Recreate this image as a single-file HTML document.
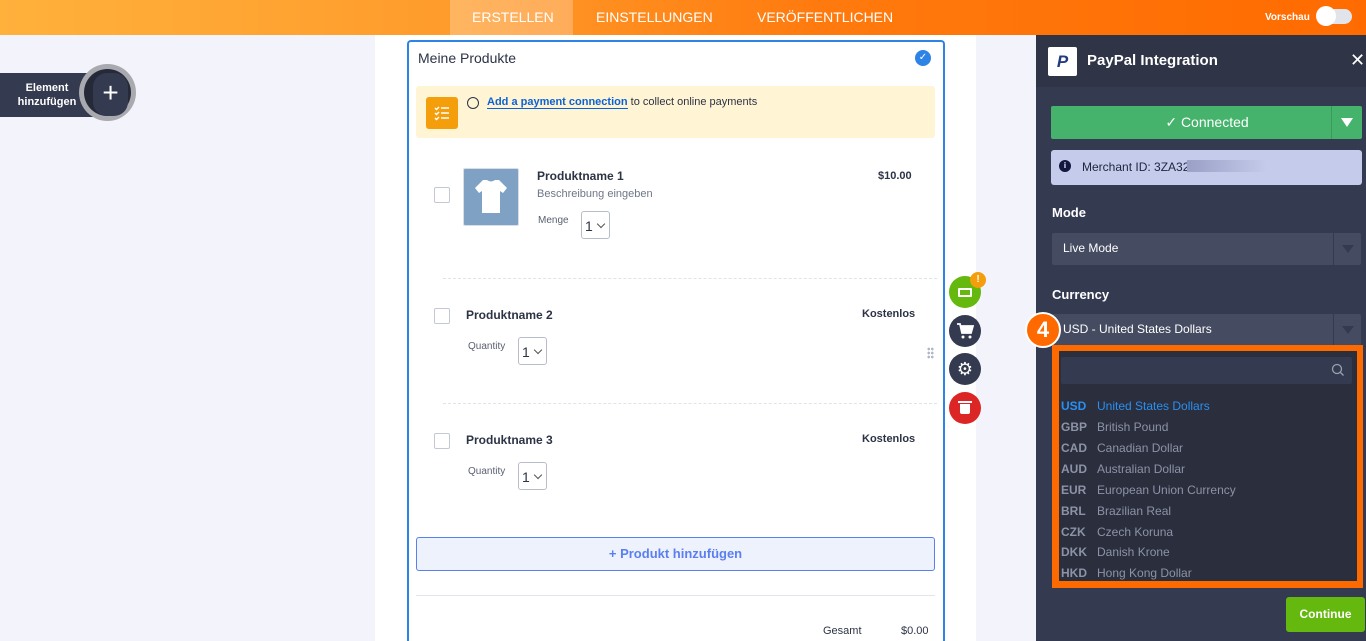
<!DOCTYPE html>
<html><head><meta charset="utf-8"><style>
*{box-sizing:border-box;margin:0;padding:0}
html,body{width:1366px;height:641px;overflow:hidden}
body{font-family:"Liberation Sans",sans-serif;background:#f3f4fb;position:relative}
#w{position:absolute;left:0;top:0;width:1366px;height:641px;overflow:hidden}
.a{position:absolute}
.top{left:0;top:0;width:1366px;height:35px;background:linear-gradient(90deg,#ffb13c 0%,#ff9a2a 35%,#ff7a0e 60%,#ff6b00 100%)}
.tab{top:0;height:35px;line-height:35px;color:#fff;font-size:14px}
.card{left:407px;top:40px;width:538px;height:601px;border:2px solid #2e84e6;border-bottom:none;border-radius:4px 4px 0 0;background:#fff}
.t{color:#2c3345}
.chk{width:16px;height:16px;border:1px solid #c3c8d4;border-radius:2px;background:#fff}
.sel{width:29px;height:28px;border:1px solid #b8bdc9;border-radius:3px;font-size:14px;color:#2c3345;padding:6px 0 0 3px}
.sel:after{content:"";position:absolute;left:16px;top:9px;width:5px;height:5px;border-right:1.5px solid #555;border-bottom:1.5px solid #555;transform:rotate(45deg)}
.dash{height:0;border-top:1px dashed #e0e3ea}
.rp{left:1036px;top:35px;width:330px;height:606px;background:#343a4f}
.fab{width:32px;height:32px;border-radius:50%}
.cur{font-size:12px;color:#8d93a6;left:1061px;width:295px}
.cur b{display:inline-block;width:36px;color:#8d93a6}
</style></head><body><div id="w">
<div class="a top"></div>
<div class="a" style="left:450px;top:0;width:123px;height:35px;background:rgba(255,255,255,.25)"></div>
<div class="a tab" style="left:472px">ERSTELLEN</div>
<div class="a tab" style="left:596px">EINSTELLUNGEN</div>
<div class="a tab" style="left:757px">VERÖFFENTLICHEN</div>
<div class="a" style="left:1265px;top:12px;color:#fff;font-size:10px;font-weight:bold">Vorschau</div>
<div class="a" style="left:1320px;top:9px;width:32px;height:15px;border-radius:8px;background:#e2e4ec"></div>
<div class="a" style="left:1316px;top:6px;width:20px;height:20px;border-radius:50%;background:#fff"></div>

<div class="a" style="left:0;top:73px;width:110px;height:44px;background:#343a4f;color:#fff;font-size:11px;font-weight:bold;text-align:center;padding:8px 16px 0 0;line-height:14px">Element<br>hinzufügen</div>
<div class="a" style="left:79px;top:64px;width:57px;height:57px;border-radius:50%;background:#a8aab0"></div>
<div class="a" style="left:84px;top:69px;width:47px;height:47px;border-radius:50%;background:#262a38"></div>
<div class="a" style="left:93px;top:73px;width:35px;height:43px;border-radius:14px;background:#343a4f;color:#fff;font-size:28px;line-height:40px;text-align:center">+</div>

<div class="a" style="left:375px;top:35px;width:601px;height:606px;background:#fff"></div>
<div class="a card"></div>
<div class="a t" style="left:418px;top:50px;font-size:14px">Meine Produkte</div>
<div class="a" style="left:915px;top:50px;width:16px;height:16px;border-radius:50%;background:#2e84e6;color:#fff;font-size:10px;text-align:center;line-height:16px">✓</div>
<div class="a" style="left:416px;top:86px;width:519px;height:52px;background:#fff4d4;border-radius:3px"></div>
<div class="a" style="left:426px;top:97px;width:32px;height:32px;background:#f59e0b;border-radius:3px"></div>
<svg class="a" style="left:434px;top:105px" width="16" height="16" viewBox="0 0 16 16" stroke="#fff" stroke-width="1.5" fill="none"><path d="M1 3l1.5 1.5L5 2M7 3h8M7 8h8M7 13h8M1 8l1.5 1.5L5 7M1 13l1.5 1.5L5 12"/></svg>
<div class="a" style="left:467px;top:97px;width:12px;height:12px;border:1.5px solid #2c3345;border-radius:50%"></div>
<div class="a" style="left:487px;top:96px;font-size:11px;color:#2c3345"><span style="color:#0b62d6;font-weight:bold;border-bottom:1px solid #0b62d6">Add a payment connection</span> to collect online payments</div>

<div class="a chk" style="left:434px;top:187px"></div>
<div class="a" style="left:463px;top:168px;width:56px;height:58px;background:#7ea1c4;border-radius:2px;border:1px solid #d8dde6"></div>
<svg class="a" style="left:473px;top:178px" width="36" height="38" viewBox="0 0 36 38"><path d="M10 2l4 0q4 3 8 0l4 0 8 8-4 5-3-2 0 22-18 0 0-22-3 2-4-5z" fill="#fff"/></svg>
<div class="a t" style="left:537px;top:169px;font-size:12px;font-weight:bold">Produktname 1</div>
<div class="a" style="left:537px;top:188px;font-size:11px;color:#6f7687">Beschreibung eingeben</div>
<div class="a" style="left:538px;top:215px;font-size:10px;color:#5a6070">Menge</div>
<div class="a sel" style="left:581px;top:211px">1</div>
<div class="a t" style="left:878px;top:170px;font-size:11px;font-weight:bold">$10.00</div>
<div class="a dash" style="left:443px;top:278px;width:494px"></div>

<div class="a chk" style="left:434px;top:308px"></div>
<div class="a t" style="left:466px;top:308px;font-size:12px;font-weight:bold">Produktname 2</div>
<div class="a t" style="left:862px;top:308px;font-size:11px;font-weight:bold">Kostenlos</div>
<div class="a" style="left:468px;top:341px;font-size:10px;color:#5a6070">Quantity</div>
<div class="a sel" style="left:518px;top:337px">1</div>
<div class="a" style="left:927px;top:347px;width:7px;height:12px;background:radial-gradient(circle,#b0b6c3 1.2px,transparent 1.5px) 0 0/3.5px 4px"></div>
<div class="a dash" style="left:443px;top:403px;width:494px"></div>

<div class="a chk" style="left:434px;top:433px"></div>
<div class="a t" style="left:466px;top:433px;font-size:12px;font-weight:bold">Produktname 3</div>
<div class="a t" style="left:862px;top:433px;font-size:11px;font-weight:bold">Kostenlos</div>
<div class="a" style="left:468px;top:466px;font-size:10px;color:#5a6070">Quantity</div>
<div class="a sel" style="left:518px;top:462px">1</div>

<div class="a" style="left:416px;top:537px;width:519px;height:34px;background:#eef2fd;border:1px solid #5a7ff0;border-radius:3px;color:#5a7ff0;font-size:13px;font-weight:bold;text-align:center;line-height:31px">+ Produkt hinzufügen</div>
<div class="a" style="left:416px;top:595px;width:519px;height:1px;background:#e3e5ea"></div>
<div class="a t" style="left:823px;top:625px;font-size:11px">Gesamt</div>
<div class="a t" style="left:901px;top:625px;font-size:11px">$0.00</div>

<div class="a fab" style="left:949px;top:276px;background:#64b80e"></div>
<div class="a" style="left:958px;top:288px;width:14px;height:9px;border:2px solid #fff;border-radius:1px"></div>
<div class="a" style="left:970px;top:272px;width:16px;height:16px;border-radius:50%;background:#f59e0b;color:#fff;font-size:10px;font-weight:bold;text-align:center;line-height:16px">!</div>
<div class="a fab" style="left:949px;top:315px;background:#343a4f"></div>
<svg class="a" style="left:956px;top:322px" width="18" height="18" viewBox="0 0 18 18" fill="#fff"><path d="M1 2h3l2 9h9l2-7H5" fill="none" stroke="#fff" stroke-width="1.8"/><path d="M5 4h12l-2 7H6z"/><circle cx="7" cy="15" r="1.5"/><circle cx="14" cy="15" r="1.5"/></svg>
<div class="a fab" style="left:949px;top:353px;background:#343a4f;color:#fff;font-size:18px;text-align:center;line-height:32px">⚙</div>
<div class="a fab" style="left:949px;top:392px;background:#dc2626"></div>
<div class="a" style="left:958px;top:401px;width:14px;height:2px;background:#fff"></div>
<div class="a" style="left:960px;top:404px;width:10px;height:10px;background:#fff;border-radius:0 0 2px 2px"></div>

<div class="a rp"></div>
<div class="a" style="left:1036px;top:35px;width:330px;height:52px;background:#2f3446"></div>
<div class="a" style="left:1048px;top:47px;width:29px;height:29px;background:#fff;border-radius:2px;color:#253b80;font-weight:bold;font-style:italic;font-size:17px;text-align:center;line-height:29px">P</div>
<div class="a" style="left:1087px;top:52px;color:#fff;font-size:15px;font-weight:bold">PayPal Integration</div>
<div class="a" style="left:1350px;top:50px;color:#fff;font-size:18px">✕</div>
<div class="a" style="left:1051px;top:106px;width:311px;height:33px;background:#45b36b;border-radius:2px"></div>
<div class="a" style="left:1331px;top:106px;width:1px;height:33px;background:#3a9a5a"></div>
<div class="a" style="left:1051px;top:114px;width:312px;text-align:center;color:#fff;font-size:14px">✓ Connected</div>
<div class="a" style="left:1341px;top:118px;border-left:6px solid transparent;border-right:6px solid transparent;border-top:9px solid #fff"></div>
<div class="a" style="left:1051px;top:150px;width:311px;height:35px;background:#c5cbea;border-radius:3px"></div>
<div class="a" style="left:1059px;top:160px;width:12px;height:12px;border-radius:50%;background:#101840;color:#fff;font-size:8px;text-align:center;line-height:12px;font-weight:bold">i</div>
<div class="a" style="left:1082px;top:160px;color:#1e2540;font-size:12px">Merchant ID: 3ZA32</div>
<div class="a" style="left:1187px;top:160px;width:80px;height:12px;background:linear-gradient(90deg,#9aa0c6,#c5cbea)"></div>
<div class="a" style="left:1052px;top:205px;color:#fff;font-size:13px;font-weight:bold">Mode</div>
<div class="a" style="left:1052px;top:233px;width:309px;height:32px;background:#454b61;border-radius:2px"></div>
<div class="a" style="left:1333px;top:233px;width:1px;height:32px;background:#343a4f"></div>
<div class="a" style="left:1063px;top:241px;color:#fff;font-size:12px">Live Mode</div>
<div class="a" style="left:1342px;top:245px;border-left:6px solid transparent;border-right:6px solid transparent;border-top:8px solid #343a4f"></div>
<div class="a" style="left:1052px;top:287px;color:#fff;font-size:13px;font-weight:bold">Currency</div>
<div class="a" style="left:1052px;top:314px;width:309px;height:32px;background:#454b61;border-radius:2px"></div>
<div class="a" style="left:1333px;top:314px;width:1px;height:32px;background:#343a4f"></div>
<div class="a" style="left:1063px;top:322px;color:#fff;font-size:12px">USD - United States Dollars</div>
<div class="a" style="left:1342px;top:326px;border-left:6px solid transparent;border-right:6px solid transparent;border-top:8px solid #343a4f"></div>
<div class="a" style="left:1025px;top:312px;width:36px;height:36px;border-radius:50%;background:#ff6a00;border:2px solid #fff;color:#fff;font-size:22px;font-weight:bold;text-align:center;line-height:32px">4</div>

<div class="a" style="left:1052px;top:345px;width:311px;height:243px;background:#ff6a00"></div>
<div class="a" style="left:1059px;top:351px;width:298px;height:230px;background:#2a2e3d"></div>
<div class="a" style="left:1061px;top:357px;width:291px;height:27px;background:#343a4f;border-radius:2px"></div>
<svg class="a" style="left:1331px;top:363px" width="14" height="14" viewBox="0 0 14 14" fill="none" stroke="#9aa0b2" stroke-width="1.3"><circle cx="6" cy="6" r="4.5"/><path d="M9.5 9.5l3 3"/></svg>
<div class="a cur" style="top:399px;color:#2b8ff0"><b style="color:#2b8ff0">USD</b>United States Dollars</div>
<div class="a cur" style="top:420px"><b>GBP</b>British Pound</div>
<div class="a cur" style="top:441px"><b>CAD</b>Canadian Dollar</div>
<div class="a cur" style="top:462px"><b>AUD</b>Australian Dollar</div>
<div class="a cur" style="top:483px"><b>EUR</b>European Union Currency</div>
<div class="a cur" style="top:504px"><b>BRL</b>Brazilian Real</div>
<div class="a cur" style="top:525px"><b>CZK</b>Czech Koruna</div>
<div class="a cur" style="top:545px"><b>DKK</b>Danish Krone</div>
<div class="a cur" style="top:566px"><b>HKD</b>Hong Kong Dollar</div>
<div class="a" style="left:1036px;top:588px;width:330px;height:53px;background:#343a4f"></div>
<div class="a" style="left:1286px;top:597px;width:79px;height:35px;background:#64b80e;border-radius:3px;color:#fff;font-size:12px;font-weight:bold;text-align:center;line-height:35px">Continue</div>
</div></body></html>
